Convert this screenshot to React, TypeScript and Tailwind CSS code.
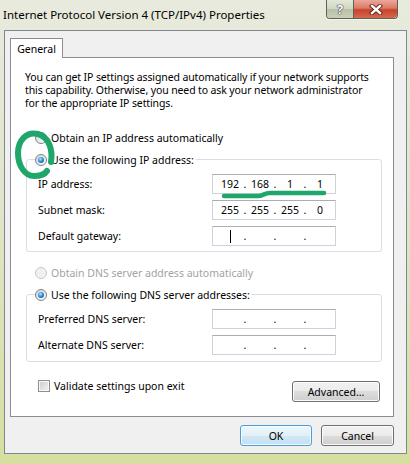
import React from "react";

function Radio({ checked, disabled }: { checked?: boolean; disabled?: boolean }) {
  return (
    <span
      className={`flex h-[12px] w-[12px] shrink-0 items-center justify-center rounded-full border ${
        disabled
          ? "border-[#c6c8cc] bg-[#f1f1f1]"
          : "border-[#7e8287] bg-[linear-gradient(135deg,#d3d4d8,#fdfdfd)]"
      }`}
    >
      {checked && (
        <span className="h-[6px] w-[6px] rounded-full bg-[radial-gradient(circle_at_40%_35%,#b8e6ff_0%,#2f93dc_45%,#0b3a78_100%)]" />
      )}
    </span>
  );
}

function IpBox({ values, cursor }: { values: string[]; cursor?: boolean }) {
  return (
    <div className="flex h-[20px] w-[124px] items-center border border-[#cfd2d8] border-t-[#abadb3] bg-white pl-[3px]">
      {values.map((v, i) => (
        <React.Fragment key={i}>
          {i > 0 && <span className="flex w-[2px] justify-center">.</span>}
          <span className="flex w-[28px] justify-center">
            {cursor && i === 0 ? <span className="h-[13px] w-px bg-black" /> : v}
          </span>
        </React.Fragment>
      ))}
    </div>
  );
}

function Field({ label, values, cursor }: { label: string; values: string[]; cursor?: boolean }) {
  return (
    <div className="flex items-center">
      <span className="w-[174px]">{label}</span>
      <IpBox values={values} cursor={cursor} />
    </div>
  );
}

function WinButton({ label, primary, width }: { label: string; primary?: boolean; width: string }) {
  return (
    <div
      className={`flex h-[21px] items-center justify-center rounded-[3px] border ${width} ${
        primary
          ? "border-[#4f9fd6] bg-[linear-gradient(#edf6fc_0%,#e2f0f9_50%,#d2e8f5_50%,#c4e0f1_100%)] shadow-[inset_0_0_0_1px_#f4fbff]"
          : "border-[#707070] bg-[linear-gradient(#f2f2f2_0%,#ebebeb_50%,#dddddd_50%,#cfcfcf_100%)] shadow-[inset_0_0_0_1px_#fbfbfb]"
      }`}
    >
      {label}
    </div>
  );
}

export default function App() {
  return (
    <div className="relative flex h-[464px] w-[410px] flex-col overflow-hidden bg-[linear-gradient(#e8eadd_0%,#e1e5cc_40%,#d6df9f_100%)] font-['Noto_Sans',sans-serif] text-[10.5px] leading-[16px] text-black">
      {/* title bar */}
      <div className="flex h-[30px] shrink-0 items-start">
        <span className="whitespace-nowrap pl-[3px] pt-[7px] text-[11.5px]">
          Internet Protocol Version 4 (TCP/IPv4) Properties
        </span>
        <div className="ml-auto mr-[12px] flex h-[19px] rounded-b-[4px] border border-t-0 border-[#5d6157] shadow-[0_1px_0_#f4f6ea]">
          <div className="flex w-[27px] items-center justify-center rounded-bl-[4px] border-r border-[#5d6157] bg-[linear-gradient(#e3e7da_0%,#cfd5c2_50%,#b9c0a9_50%,#c8cfb6_100%)] text-[13px] font-bold leading-none text-white [text-shadow:0_0_1px_#2a2a2a,0_0_1px_#2a2a2a,0_0_1px_#2a2a2a]">
            ?
          </div>
          <div className="flex w-[43px] items-center justify-center rounded-br-[4px] bg-[linear-gradient(#eaa899_0%,#dc7a64_45%,#c6432b_55%,#d5694f_100%)]">
            <svg width="14" height="11" viewBox="0 0 14 11">
              <path d="M3 2 L11 9 M11 2 L3 9" stroke="#5a1f14" strokeWidth="4.2" strokeLinecap="square" />
              <path d="M3 2 L11 9 M11 2 L3 9" stroke="#ffffff" strokeWidth="2.4" strokeLinecap="square" />
            </svg>
          </div>
        </div>
      </div>

      {/* client area */}
      <div className="ml-[4px] flex h-[424px] w-[403px] flex-col border border-[#7f8790] bg-[#f0f0f0] pl-[5px] pt-[7px]">
        <div className="relative z-10 -mb-px flex h-[20px] w-[53px] items-center justify-center border border-b-0 border-[#898c95] bg-white">
          General
        </div>
        <div className="flex h-[360px] w-[384px] flex-col border border-[#898c95] bg-white pl-[14px] pt-[13px]">
          <p className="whitespace-nowrap leading-[13px] tracking-[-0.12px]">
            You can get IP settings assigned automatically if your network supports
            <br />
            this capability. Otherwise, you need to ask your network administrator
            <br />
            for the appropriate IP settings.
          </p>

          <div className="ml-[10px] mt-[20px] flex h-[16px] items-center gap-[4px]">
            <Radio />
            <span>Obtain an IP address automatically</span>
          </div>

          <fieldset className="ml-px mt-[5px] w-[356px] rounded-[3px] border border-[#d5dfe5] pb-[5px]">
            <legend className="ml-[8px] pr-[2px]">
              <span className="inline-flex h-[16px] items-center gap-[4px]">
                <Radio checked />
                <span>Use the following IP address:</span>
              </span>
            </legend>
            <div className="flex flex-col gap-[6px] pl-[11px] pt-[6px]">
              <Field label="IP address:" values={["192", "168", "1", "1"]} />
              <Field label="Subnet mask:" values={["255", "255", "255", "0"]} />
              <Field label="Default gateway:" values={["", "", "", ""]} cursor />
            </div>
          </fieldset>

          <div className="ml-[10px] mt-[13px] flex h-[16px] items-center gap-[4px] text-[#a3a3a3]">
            <Radio disabled />
            <span>Obtain DNS server address automatically</span>
          </div>

          <fieldset className="ml-px mt-[5px] w-[356px] rounded-[3px] border border-[#d5dfe5] pb-[6px]">
            <legend className="ml-[8px] pr-[2px]">
              <span className="inline-flex h-[16px] items-center gap-[4px]">
                <Radio checked />
                <span>Use the following DNS server addresses:</span>
              </span>
            </legend>
            <div className="flex flex-col gap-[6px] pl-[11px] pt-[6px]">
              <Field label="Preferred DNS server:" values={["", "", "", ""]} />
              <Field label="Alternate DNS server:" values={["", "", "", ""]} />
            </div>
          </fieldset>

          <div className="mr-[13px] mt-[16px] flex items-start">
            <div className="ml-[13px] flex h-[16px] items-center gap-[4px]">
              <span className="h-[12px] w-[12px] border border-[#8e8f8f] bg-[linear-gradient(135deg,#cbcbcb,#f4f4f4)] shadow-[inset_0_0_0_1px_#f8f8f8]" />
              <span>Validate settings upon exit</span>
            </div>
            <div className="ml-auto mt-[3px]">
              <WinButton label="Advanced..." width="w-[88px]" />
            </div>
          </div>
        </div>

        <div className="mt-[8px] flex w-[384px] justify-end gap-[9px]">
          <WinButton label="OK" primary width="w-[72px]" />
          <WinButton label="Cancel" width="w-[73px]" />
        </div>
      </div>

      {/* hand-drawn green marks */}
      <svg className="pointer-events-none absolute left-0 top-0" width="410" height="464">
        <path
          d="M51 162 C53 150 49 137 38 134 C26 131 18 141 18 153 C18 166 25 176 34 176 C40 176 45 174 47 171"
          fill="none"
          stroke="#1fa66b"
          strokeWidth="6"
          strokeLinecap="round"
        />
        <path
          d="M224 196 L258 196 C263 196 264 193 270 193 L324 193"
          fill="none"
          stroke="#1fa66b"
          strokeWidth="4.5"
          strokeLinecap="round"
        />
      </svg>
    </div>
  );
}
